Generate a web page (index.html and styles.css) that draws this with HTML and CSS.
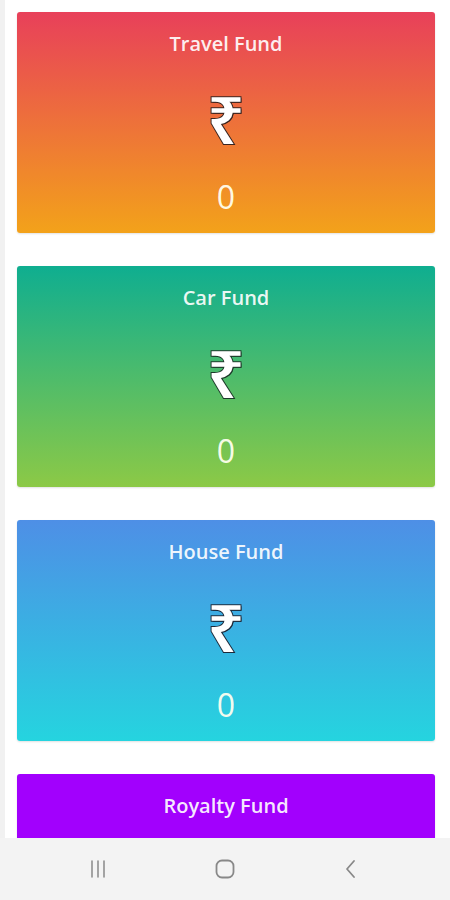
FILE: index.html
```html
<!DOCTYPE html>
<html>
<head>
<meta charset="utf-8">
<link rel="stylesheet" href="styles.css">
</head>
<body>
<div class="screen">
  <div class="list">
    <div class="card travel">
      <div class="title">Travel Fund</div>
      <div class="rupee">₹</div>
      <div class="amount">0</div>
    </div>
    <div class="card car">
      <div class="title">Car Fund</div>
      <div class="rupee">₹</div>
      <div class="amount">0</div>
    </div>
    <div class="card house">
      <div class="title">House Fund</div>
      <div class="rupee">₹</div>
      <div class="amount">0</div>
    </div>
    <div class="card royalty">
      <div class="title">Royalty Fund</div>
    </div>
  </div>
  <div class="navbar">
    <svg class="nav-icon" width="20" height="20" viewBox="0 0 20 20"><g stroke="#888" stroke-width="1.5" fill="none" stroke-linecap="round"><line x1="4" y1="2" x2="4" y2="18"/><line x1="10" y1="2" x2="10" y2="18"/><line x1="16" y1="2" x2="16" y2="18"/></g></svg>
    <svg class="nav-icon" width="22" height="22" viewBox="0 0 22 22"><rect x="2.5" y="2.5" width="17" height="17" rx="5.5" stroke="#888" stroke-width="1.8" fill="none"/></svg>
    <svg class="nav-icon" width="20" height="20" viewBox="0 0 20 20"><polyline points="13,2 6,10 13,18" stroke="#888" stroke-width="1.8" fill="none" stroke-linecap="round" stroke-linejoin="round"/></svg>
  </div>
</div>
</body>
</html>
```
FILE: styles.css
```css
* { box-sizing: border-box; }
html, body {
  margin: 0;
  padding: 0;
  background: #ffffff;
  font-family: "Open Sans", "Noto Sans", sans-serif;
}
.screen {
  width: 450px;
  height: 900px;
  overflow: hidden;
  border-left: 5px solid #f1f1f1;
}
.list {
  display: flex;
  flex-direction: column;
  gap: 33px;
  padding: 12px 15px 0 12px;
}
.card {
  height: 221px;
  border-radius: 3px;
  display: flex;
  flex-direction: column;
  align-items: center;
  color: rgba(255, 255, 255, 0.92);
  box-shadow: 0 1px 2px rgba(0, 0, 0, 0.12);
}
.travel { background: linear-gradient(to bottom, #e8405a, #f3a21a); }
.car { background: linear-gradient(to bottom, #0fae90, #8cc946); }
.house { background: linear-gradient(to bottom, #4e8fe6, #25d4df); }
.royalty { background: #a200fd; }
.title {
  font-size: 20px;
  font-weight: 600;
  line-height: 28px;
  margin-top: 18px;
}
.rupee {
  font-family: "Noto Sans", "DejaVu Sans", sans-serif;
  font-size: 66px;
  font-weight: 600;
  line-height: 74px;
  margin-top: 23px;
  color: #ffffff;
  -webkit-text-stroke: 2px #3a2520;
  paint-order: stroke fill;
  text-shadow: 1px 1px 0 #3a2520;
}
.car .rupee { -webkit-text-stroke-color: #1d3a2a; text-shadow: 1px 1px 0 #1d3a2a; }
.house .rupee { -webkit-text-stroke-color: #1d2a3a; text-shadow: 1px 1px 0 #1d2a3a; }
.amount {
  font-size: 32px;
  line-height: 40px;
  margin-top: 22px;
  color: rgba(255, 255, 240, 0.95);
}
.navbar {
  position: fixed;
  left: 0;
  right: 0;
  bottom: 0;
  height: 62px;
  background: #f3f3f3;
  display: flex;
  justify-content: space-between;
  align-items: center;
  padding: 0 89px 0 88px;
}
.nav-icon { display: block; }
```
